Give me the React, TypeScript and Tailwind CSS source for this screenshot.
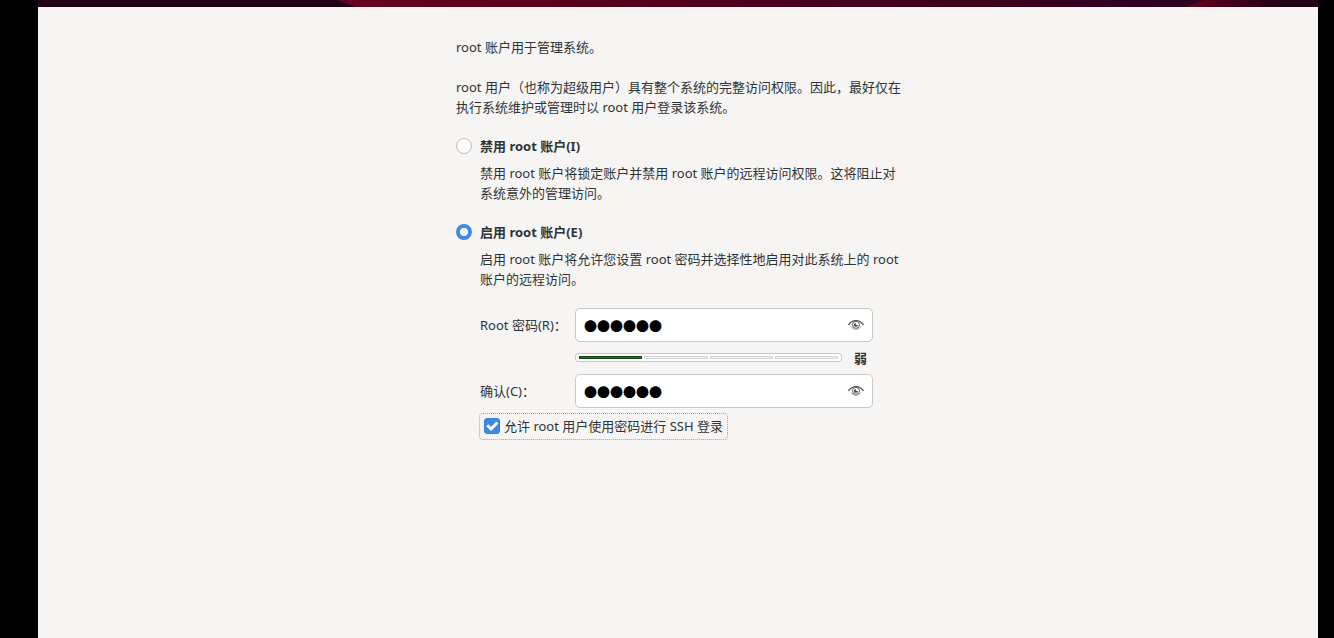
import React, { useState } from "react";

function EyeIcon() {
    return (
        <svg width="16" height="16" viewBox="0 0 16 16" fill="none" aria-hidden="true">
            <path d="M0.500 8C2.400 5 5 3.600 8 3.600s5.600 1.400 7.500 4.400" stroke="#4f5658" strokeWidth="1.300" />
            <path d="M3 9.500C4.300 11.300 6 12.400 8 12.400s3.700-1.100 5-2.900" stroke="#8d9293" strokeWidth="0.900" />
            <circle cx="8" cy="7.800" r="3.500" stroke="#5b6163" strokeWidth="1" />
            <path d="M7.800 6v1.900h2A1.900 1.900 0 1 1 7.800 6z" fill="#3c4244" />
        </svg>
    );
}

type PasswordFieldProps = {
    id: string;
    value: string;
    onChange: (value: string) => void;
};

function PasswordField({ id, value, onChange }: PasswordFieldProps) {
    return (
        <div className="flex h-[34px] items-center rounded-[5px] border border-[#cdc7c2] bg-white px-2">
            <input
                id={id}
                type="text"
                autoComplete="off"
                value={value}
                onChange={(e) => onChange(e.target.value.replace(/./g, "●"))}
                className="min-w-0 flex-1 bg-transparent pt-0.5 font-['Noto_Sans_CJK_SC',sans-serif] text-[13px] leading-5 text-black outline-none"
            />
            <button type="button" aria-label="显示密码">
                <EyeIcon />
            </button>
        </div>
    );
}

type AccountOptionProps = {
    id: string;
    label: string;
    checked: boolean;
    onSelect: () => void;
    children: React.ReactNode;
};

function AccountOption({ id, label, checked, onSelect, children }: AccountOptionProps) {
    return (
        <div className="mt-[19px]">
            <div className="flex items-center gap-2">
                <input
                    id={id}
                    type="radio"
                    name="root-account"
                    checked={checked}
                    onChange={onSelect}
                    className="size-4 appearance-none rounded-full border border-[#bfb8b1] bg-white checked:border-4 checked:border-[#3f89e5]"
                />
                <label htmlFor={id} className="font-bold">{label}</label>
            </div>
            <p className="mt-[7px] pl-6">{children}</p>
        </div>
    );
}

export default function App() {
    const [enabled, setEnabled] = useState(true);
    const [password, setPassword] = useState("●●●●●●");
    const [confirm, setConfirm] = useState("●●●●●●");
    const [allowSsh, setAllowSsh] = useState(true);
    const strength = 1;

    return (
        <div className="flex min-h-screen flex-col bg-black pl-[38px] pr-4 font-['Noto_Sans','Noto_Sans_CJK_SC',sans-serif] text-[13px] leading-5 text-[#2e3436]">
            <header className="h-[7px] bg-[#220016]">
                <svg className="block h-full w-full" viewBox="0 0 1280 7" preserveAspectRatio="none" aria-hidden="true">
                    <defs>
                        <linearGradient id="banner">
                            <stop offset="0" stopColor="#66001f" />
                            <stop offset="0.300" stopColor="#58001c" />
                            <stop offset="1" stopColor="#2c0020" />
                        </linearGradient>
                        <linearGradient id="streak">
                            <stop offset="0" stopColor="#66001f" />
                            <stop offset="0.400" stopColor="#4a001c" />
                            <stop offset="1" stopColor="#220016" />
                        </linearGradient>
                    </defs>
                    <path d="M299 0H1166L1148 7H318z" fill="url(#banner)" />
                    <path d="M1166 0H1240L1222 7H1148z" fill="url(#streak)" />
                </svg>
            </header>
            <main className="flex-1 bg-[#f6f5f4] pt-[30px] pb-8">
                <div className="mx-auto w-full max-w-[448px] pl-0.5">
                    <p>root 账户用于管理系统。</p>
                    <p className="mt-5">
                        root 用户（也称为超级用户）具有整个系统的完整访问权限。因此，最好仅在执行系统维护或管理时以 root 用户登录该系统。
                    </p>

                    <form onSubmit={(e) => e.preventDefault()}>
                        <AccountOption id="disable-root" label="禁用 root 账户(I)" checked={!enabled} onSelect={() => setEnabled(false)}>
                            禁用 root 账户将锁定账户并禁用 root 账户的远程访问权限。这将阻止对系统意外的管理访问。
                        </AccountOption>
                        <AccountOption id="enable-root" label="启用 root 账户(E)" checked={enabled} onSelect={() => setEnabled(true)}>
                            启用 root 账户将允许您设置 root 密码并选择性地启用对此系统上的 root 账户的远程访问。
                        </AccountOption>

                        <div className="mt-[19px] mr-[29px] ml-6 grid grid-cols-[95px_1fr] items-center">
                            <label htmlFor="root-password">Root 密码(R)：</label>
                            <PasswordField id="root-password" value={password} onChange={setPassword} />

                            <div className="col-start-2 flex h-8 items-center gap-3 pb-px">
                                <div className="flex h-[9px] flex-1 gap-0.5 rounded-[3px] border border-[#cdc7c2] bg-white px-[3px] py-0.5">
                                    {[1, 2, 3, 4].map((level) => (
                                        <div
                                            key={level}
                                            className={level <= strength ? "flex-1 border border-[#0f4d12] bg-[#008000]" : "flex-1 border border-[#d3d7db] bg-[#f2f3f4]"}
                                        />
                                    ))}
                                </div>
                                <strong className="w-[19px]">弱</strong>
                            </div>

                            <label htmlFor="confirm-password">确认(C)：</label>
                            <PasswordField id="confirm-password" value={confirm} onChange={setConfirm} />
                        </div>

                        <div className="mt-[5px] ml-[23px] inline-flex h-[27px] items-center gap-1 rounded-sm border border-dotted border-[#a0a2a1] px-1 pb-px">
                            <span className="grid">
                                <input
                                    id="allow-ssh"
                                    type="checkbox"
                                    checked={allowSsh}
                                    onChange={(e) => setAllowSsh(e.target.checked)}
                                    className="peer col-start-1 row-start-1 size-4 appearance-none rounded-[3px] border border-[#bfb8b1] bg-white checked:border-[#3a80db] checked:bg-[#3f89e5]"
                                />
                                <svg className="pointer-events-none invisible col-start-1 row-start-1 peer-checked:visible" width="16" height="16" viewBox="0 0 16 16" aria-hidden="true">
                                    <path d="M3.300 7.300 7 11l6.400-6.400" fill="none" stroke="white" strokeWidth="2.800" />
                                </svg>
                            </span>
                            <label htmlFor="allow-ssh">允许 root 用户使用密码进行 SSH 登录</label>
                        </div>
                    </form>
                </div>
            </main>
        </div>
    );
}
